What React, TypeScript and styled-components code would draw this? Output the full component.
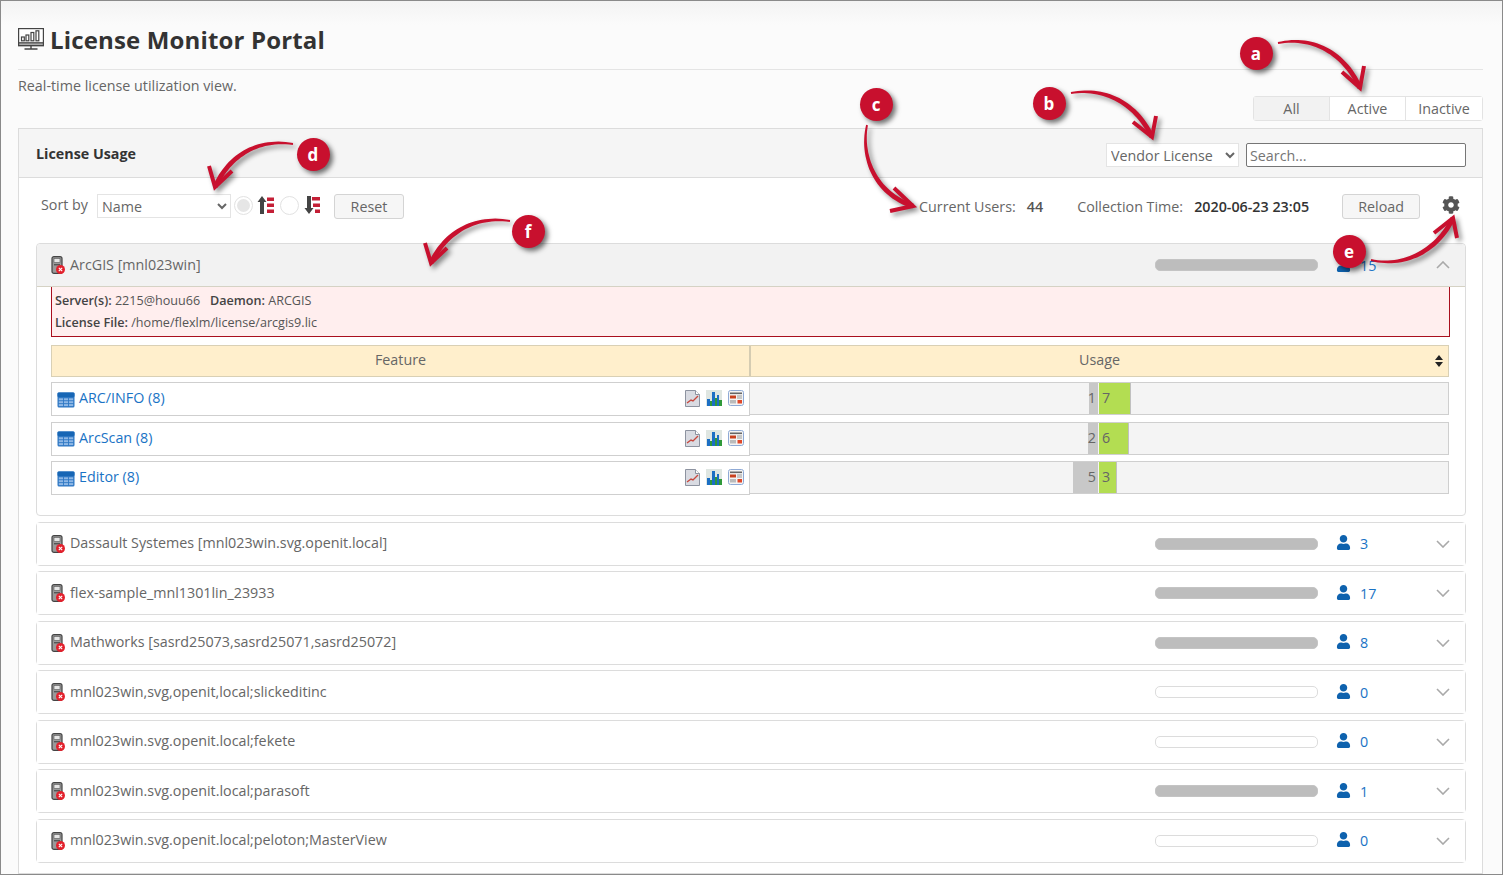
import React from "react";
import styled, { createGlobalStyle } from "styled-components";
import { FaCog, FaUser } from "react-icons/fa";

const Global = createGlobalStyle`
  html, body { margin: 0; padding: 0; height: 100%; overflow: hidden; background: #fff; }
  #root { height: 100%; }
  * { box-sizing: border-box; }
  body { font-family: "Open Sans", "Liberation Sans", sans-serif; font-size: 14.3px; color: #666; }
`;

const RED = "#c8102e";

const Page = styled.div`
  position: relative;
  width: 1503px;
  height: 875px;
  border: 1px solid #8a8a8a;
  padding: 0 19px 0 17px;
  overflow: hidden;
  display: flex;
  flex-direction: column;
  background: linear-gradient(#f3f3f3 0, #fbfbfb 24px, #fbfbfb 100%);
`;
const TitleRow = styled.div`
  height: 69px;
  flex: none;
  padding-top: 8px;
  display: flex;
  align-items: center;
  gap: 6px;
  border-bottom: 1px solid #e4e4e4;
`;
const Title = styled.h1`
  margin: 0;
  font-size: 24px;
  font-weight: 700;
  color: #333;
  letter-spacing: 0.15px;
`;
const SubRow = styled.div`
  flex: none;
  height: 58px;
  display: flex;
  justify-content: space-between;
  align-items: flex-start;
`;
const Sub = styled.p`
  margin: 6px 0 0;
  line-height: 20px;
  font-size: 14.3px;
  color: #666;
`;
const Tabs = styled.div`
  margin-top: 26px;
  display: flex;
  height: 25px;
  border: 1px solid #e3e3e3;
  border-radius: 3px;
  background: #fff;
`;
const Tab = styled.div<{ $active?: boolean; $w: number }>`
  width: ${(p) => p.$w}px;
  display: flex;
  align-items: center;
  justify-content: center;
  font-size: 14.3px;
  color: #666;
  background: ${(p) => (p.$active ? "#f2f2f2" : "#fff")};
  & + & { border-left: 1px solid #e3e3e3; }
`;
const Panel = styled.section`
  flex: 1;
  min-height: 0;
  border: 1px solid #dcdcdc;
  background: #fff;
  display: flex;
  flex-direction: column;
`;
const PanelHead = styled.header`
  flex: none;
  height: 49px;
  padding: 0 16px 0 17px;
  display: flex;
  align-items: center;
  background: #f5f5f5;
  border-bottom: 1px solid #dcdcdc;
`;
const PanelTitle = styled.h2`
  margin: 0;
  font-size: 14.3px;
  font-weight: 700;
  color: #333;
`;
const NativeSelect = styled.select<{ $w: number }>`
  flex: none;
  width: ${(p) => p.$w}px;
  height: 24px;
  font: 14.3px "Open Sans", sans-serif;
  color: #666;
  background: #fff;
  border: 1px solid #e4e4e4;
  padding: 0;
  outline: none;
`;
const HeadControls = styled.div`
  margin-left: auto;
  margin-top: 4px;
  display: flex;
  gap: 7px;
  align-items: center;
`;
const Search = styled.input`
  width: 220px;
  height: 24px;
  font: 14.3px "Open Sans", sans-serif;
  color: #666;
  padding: 0 3px;
  border: 1px solid #767676;
  border-radius: 2px;
  background: #fff;
  &::placeholder { color: #757575; opacity: 1; }
`;
const PanelBody = styled.div`
  padding: 0 16px 0 17px;
  flex: 1;
  min-height: 0;
`;
const Toolbar = styled.div`
  height: 65px;
  padding: 16px 5px 0 5px;
  display: flex;
  align-items: flex-start;
  font-size: 14.3px;
`;
const SortLabel = styled.span`
  flex: none;
  white-space: nowrap;
  line-height: 22px;
  margin-right: 9px;
`;
const Radio = styled.span<{ $on?: boolean }>`
  flex: none;
  width: 19px;
  height: 19px;
  margin-top: 2px;
  border-radius: 50%;
  border: 1px solid #e2e2e2;
  background: #fff;
  display: flex;
  align-items: center;
  justify-content: center;
  &::after {
    content: "";
    width: 13px;
    height: 13px;
    border-radius: 50%;
    background: ${(p) => (p.$on ? "#e6e6e6" : "transparent")};
  }
`;
const SortIcon = styled.svg<{ $ml: number }>`
  flex: none;
  width: 18px;
  height: 20px;
  margin: 1px 0 0 ${(p) => p.$ml}px;
`;
const Button = styled.button<{ $w: number; $ml: number }>`
  flex: none;
  width: ${(p) => p.$w}px;
  height: 25px;
  margin-left: ${(p) => p.$ml}px;
  font: 14.3px "Open Sans", sans-serif;
  color: #666;
  background: #f6f6f6;
  border: 1px solid #d4d4d4;
  border-radius: 3px;
  padding: 0;
`;
const Stat = styled.span<{ $ml?: number }>`
  flex: none;
  margin-left: ${(p) => p.$ml ?? 0}px;
  line-height: 26px;
  white-space: nowrap;
`;
const StatValue = styled.strong<{ $dark?: boolean }>`
  font-weight: 600;
  color: ${(p) => (p.$dark ? "#333" : "#555")};
  margin-left: 11px;
`;
const Gear = styled(FaCog)`
  margin: 2px 0 0 22px;
  width: 18px;
  height: 18px;
  color: #555;
  flex: none;
`;
const Section = styled.div<{ $open?: boolean }>`
  border: 1px solid #dcdcdc;
  border-radius: 4px;
  margin-bottom: ${(p) => (p.$open ? 6 : 5.5)}px;
  background: #fff;
`;
const SectionHead = styled.div<{ $open?: boolean }>`
  height: ${(p) => (p.$open ? 43 : 42)}px;
  display: flex;
  align-items: center;
  padding: 0 15px 0 14px;
  background: ${(p) => (p.$open ? "#f2f2f2" : "#fff")};
  ${(p) => (p.$open ? "border-bottom: 1px solid #d5d2c4; border-radius: 4px 4px 0 0;" : "")}
`;
const VendorName = styled.span`
  margin-left: 5px;
  font-size: 14.3px;
  color: #666;
  position: relative;
  top: -1px;
`;
const Meter = styled.div<{ $full: boolean }>`
  margin-left: auto;
  width: 163px;
  height: 12px;
  border-radius: 5px;
  background: ${(p) => (p.$full ? "#bdbdbd" : "#fff")};
  border: 1px solid ${(p) => (p.$full ? "#c4c4c4" : "#dcdcdc")};
`;
const UserIcon = styled(FaUser)`
  margin-left: 18px;
  width: 15px;
  height: 15px;
  color: #0e62ae;
  flex: none;
  position: relative;
  top: -1px;
`;
const Count = styled.span`
  margin-left: 9px;
  width: 76px;
  color: #1a73c5;
  font-size: 14.3px;
`;
const Chevron = styled.svg`
  width: 14px;
  height: 8px;
  flex: none;
  fill: none;
  stroke: #a9a9a9;
  stroke-width: 1.6;
`;
const SectionBody = styled.div`
  padding: 0 15px 14px 14px;
`;
const InfoBox = styled.div`
  height: 50px;
  padding: 3px 3px;
  background: #ffeeee;
  border: 1px solid #a90f1e;
  border-top: 0;
  font-size: 12.6px;
  line-height: 22px;
  color: #555;
  margin-bottom: 8px;
  strong { font-weight: 600; color: #444; }
`;
const TableHead = styled.div`
  display: grid;
  grid-template-columns: 697px 699px;
  width: 1398px;
  height: 32px;
  background: #ffefcc;
  border: 1px solid #d9d0b5;
  margin-bottom: 5px;
`;
const HeadCell = styled.div`
  position: relative;
  display: flex;
  align-items: center;
  justify-content: center;
  padding-bottom: 3px;
  font-size: 14.3px;
  color: #666;
  & + & { border-left: 2px solid #d5ccb2; }
`;
const SortCaret = styled.svg`
  position: absolute;
  right: 5px;
  top: 9px;
  width: 8px;
  height: 12px;
`;
const Row = styled.div`
  display: grid;
  grid-template-columns: 699px 699px;
  height: 34px;
  margin-bottom: 5.5px;
`;
const FeatureCell = styled.div`
  border: 1px solid #cfcfcf;
  background: #fff;
  display: flex;
  align-items: center;
  padding: 0 5px 1px;
`;
const FeatureLink = styled.a`
  margin-left: 4px;
  color: #1a73c5;
  font-size: 14.3px;
  text-decoration: none;
  position: relative;
  top: -1px;
`;
const ReportIcons = styled.div`
  margin-left: auto;
  display: flex;
  gap: 6px;
`;
const UsageCell = styled.div`
  height: 33px;
  display: grid;
  grid-template-columns: 349px 349px;
  background: #f4f4f4;
  border: 1px solid #cfcfcf;
  border-left: 0;
`;
const Bars = styled.div<{ $right?: boolean }>`
  display: flex;
  justify-content: ${(p) => (p.$right ? "flex-start" : "flex-end")};
`;
const Used = styled.div`
  background: #c8c8c8;
  display: flex;
  align-items: center;
  justify-content: flex-end;
  padding: 0 2px 2px 0;
  font-size: 14.3px;
  color: #666;
  border-right: 1px solid #f4f4f4;
`;
const Free = styled.div`
  background: #b3dd52;
  border-right: 1px solid #c0c0c0;
  display: flex;
  align-items: center;
  padding: 0 0 2px 3px;
  font-size: 14.3px;
  color: #666;
`;
const Badge = styled.div<{ $x: number; $y: number }>`
  position: absolute;
  left: ${(p) => p.$x - 17.5}px;
  top: ${(p) => p.$y - 17.5}px;
  width: 33px;
  height: 33px;
  border-radius: 50%;
  background: ${RED};
  color: #fff;
  font-weight: 700;
  font-size: 17px;
  display: flex;
  align-items: center;
  justify-content: center;
  box-shadow: 3px 3px 5px rgba(0, 0, 0, 0.55);
  z-index: 6;
`;
const Overlay = styled.svg`
  position: absolute;
  left: -1px;
  top: -1px;
  width: 1503px;
  height: 875px;
  pointer-events: none;
  z-index: 5;
  filter: drop-shadow(3px 3px 2.5px rgba(0, 0, 0, 0.45));
`;

type P = [number, number];
function taper(a: P, b: P, c: P, d: P): string {
  const L: P[] = [];
  const R: P[] = [];
  for (let i = 0; i <= 30; i++) {
    const t = i / 30;
    const u = 1 - t;
    const x = u * u * u * a[0] + 3 * u * u * t * b[0] + 3 * u * t * t * c[0] + t * t * t * d[0];
    const y = u * u * u * a[1] + 3 * u * u * t * b[1] + 3 * u * t * t * c[1] + t * t * t * d[1];
    const dx = 3 * u * u * (b[0] - a[0]) + 6 * u * t * (c[0] - b[0]) + 3 * t * t * (d[0] - c[0]);
    const dy = 3 * u * u * (b[1] - a[1]) + 6 * u * t * (c[1] - b[1]) + 3 * t * t * (d[1] - c[1]);
    const n = Math.hypot(dx, dy) || 1;
    const w = 0.9 + 1.5 * Math.sin(Math.min(t * 1.3, 1) * Math.PI * 0.5);
    L.push([x - (dy / n) * w, y + (dx / n) * w]);
    R.push([x + (dy / n) * w, y - (dx / n) * w]);
  }
  return "M" + [...L, ...R.reverse()].map((q) => q[0].toFixed(1) + " " + q[1].toFixed(1)).join("L") + "Z";
}

const Arrow = ({ a, b, c, d, w1, w2 }: { a: P; b: P; c: P; d: P; w1: P; w2: P }) => (
  <g>
    <path d={taper(a, b, c, d)} fill={RED} />
    <polyline points={`${w1} ${d} ${w2}`} fill="none" stroke={RED} strokeWidth={4} strokeLinejoin="miter" />
  </g>
);

const MonitorIcon = () => (
  <svg width="26" height="22" viewBox="0 0 26 22" fill="none" stroke="#444" strokeWidth="1.2">
    <rect x="0.6" y="0.6" width="24.8" height="17" fill="#fff" />
    <rect x="0.6" y="14.8" width="24.8" height="2.8" fill="#aaa" />
    <path d="M13 18v2.5M6.5 21h13" strokeWidth="1.4" />
    <rect x="3.5" y="9" width="2.8" height="3.8" />
    <rect x="8" y="7" width="2.8" height="5.8" />
    <rect x="13" y="4.5" width="2.8" height="8.3" />
    <rect x="18" y="2.8" width="2.8" height="10" />
  </svg>
);
const VendorIcon = () => (
  <svg width="14" height="18" viewBox="0 0 14 18" style={{ flex: "none" }}>
    <rect x="1" y="0.6" width="10" height="16.8" rx="2" fill="#9a9a9a" stroke="#444" strokeWidth="1.2" />
    <rect x="3" y="2.5" width="6" height="4" fill="#e6e6e6" stroke="#555" strokeWidth="0.6" />
    <rect x="3" y="8" width="6" height="1.4" fill="#555" />
    <circle cx="9.5" cy="13.5" r="4.5" fill="#e3202c" />
    <path d="M7.8 11.8l3.4 3.4M11.2 11.8l-3.4 3.4" stroke="#fff" strokeWidth="1.1" />
  </svg>
);
const TableIcon = () => (
  <svg width="18" height="16" viewBox="0 0 18 16" style={{ flex: "none", position: "relative", top: 1 }}>
    <rect x="0.5" y="0.5" width="17" height="15" rx="1.5" fill="#2f78c4" />
    <rect x="0.5" y="0.5" width="17" height="4.5" rx="1" fill="#1766b5" />
    {[6.3, 9.2, 12.1].map((y) =>
      [1.8, 6.9, 12].map((x) => <rect key={`${x}-${y}`} x={x} y={y} width="4.2" height="2" fill="#8fb8e6" />)
    )}
  </svg>
);
const TrendIcon = () => (
  <svg width="15" height="17" viewBox="0 0 15 17">
    <path d="M0.5 .5h10l4 4v12h-14z" fill="#d9dbe2" stroke="#8d93a0" />
    <path d="M10.5 .5v4h4" fill="#fff" stroke="#8d93a0" />
    <path d="M2 13l4-3 2 1 5-5" fill="none" stroke="#c8493f" strokeWidth="1.4" />
  </svg>
);
const BarsIcon = () => (
  <svg width="16" height="16" viewBox="0 0 16 16">
    <rect width="16" height="16" fill="#dfe6e2" />
    <rect x="1" y="9" width="3" height="7" fill="#1c6fc4" />
    <rect x="4" y="11" width="2" height="5" fill="#2f9a3a" />
    <rect x="6" y="2" width="3" height="14" fill="#1c6fc4" />
    <rect x="9" y="8" width="2" height="8" fill="#2f9a3a" />
    <rect x="11" y="5" width="2" height="11" fill="#1c6fc4" />
    <rect x="13" y="10" width="3" height="6" fill="#2f9a3a" />
  </svg>
);
const SheetIcon = () => (
  <svg width="16" height="16" viewBox="0 0 16 16">
    <rect x="0.5" y="0.5" width="15" height="15" rx="2" fill="#f4f4f4" stroke="#8faad6" />
    <rect x="2" y="2.5" width="12" height="1.6" fill="#666" />
    <rect x="2" y="5.5" width="6" height="3" fill="#c8401f" />
    <rect x="9" y="5.5" width="5" height="1" fill="#999" />
    <rect x="9" y="7.5" width="5" height="1" fill="#999" />
    <rect x="2" y="10" width="6" height="3.5" fill="#bbb" />
    <rect x="9.5" y="10" width="4.5" height="3.5" fill="#e0492a" />
  </svg>
);

const SortAsc = () => (
  <SortIcon $ml={4} viewBox="0 0 18 20">
    <path d="M5 1l4.5 6H7v12H3V7H.5z" fill="#444" />
    <path d="M10 2.5h7v3.5h-7zM10 8.5h7V12h-7zM10 14.5h7V18h-7z" fill="#c41f36" />
  </SortIcon>
);
const SortDesc = () => (
  <SortIcon $ml={5} viewBox="0 0 18 20">
    <path d="M3 1h4v12h2.5L5 19 .5 13H3z" fill="#444" />
    <path d="M8 2h8v3.5H8zM9 8.5h7V12H9zM11 14.5h5V18h-5z" fill="#c41f36" />
  </SortIcon>
);

const ChevronDown = () => (
  <Chevron viewBox="0 0 14 8"><polyline points="1,1 7,7 13,1" /></Chevron>
);
const ChevronUp = () => (
  <Chevron viewBox="0 0 14 8"><polyline points="1,7 7,1 13,7" /></Chevron>
);

const features = [
  { name: "ARC/INFO (8)", used: 1, free: 7, uw: 10, fw: 32 },
  { name: "ArcScan (8)", used: 2, free: 6, uw: 11, fw: 30 },
  { name: "Editor (8)", used: 5, free: 3, uw: 26, fw: 18 },
];
const vendors = [
  { name: "Dassault Systemes [mnl023win.svg.openit.local]", count: 3, full: true },
  { name: "flex-sample_mnl1301lin_23933", count: 17, full: true },
  { name: "Mathworks [sasrd25073,sasrd25071,sasrd25072]", count: 8, full: true },
  { name: "mnl023win,svg,openit,local;slickeditinc", count: 0, full: false },
  { name: "mnl023win.svg.openit.local;fekete", count: 0, full: false },
  { name: "mnl023win.svg.openit.local;parasoft", count: 1, full: true },
  { name: "mnl023win.svg.openit.local;peloton;MasterView", count: 0, full: false },
];

export default function App() {
  return (
    <Page>
      <Global />
      <TitleRow>
        <MonitorIcon />
        <Title>License Monitor Portal</Title>
      </TitleRow>
      <SubRow>
        <Sub>Real-time license utilization view.</Sub>
        <Tabs>
          <Tab $active $w={75}>All</Tab>
          <Tab $w={76}>Active</Tab>
          <Tab $w={77}>Inactive</Tab>
        </Tabs>
      </SubRow>
      <Panel>
        <PanelHead>
          <PanelTitle>License Usage</PanelTitle>
          <HeadControls>
            <NativeSelect $w={133} defaultValue="Vendor License">
              <option>Vendor License</option>
            </NativeSelect>
            <Search placeholder="Search..." />
          </HeadControls>
        </PanelHead>
        <PanelBody>
          <Toolbar>
            <SortLabel>Sort by</SortLabel>
            <NativeSelect $w={134} defaultValue="Name" style={{ marginRight: 3 }}>
              <option>Name</option>
            </NativeSelect>
            <Radio $on />
            <SortAsc />
            <Radio style={{ marginLeft: 5 }} />
            <SortDesc />
            <Button $w={70} $ml={12}>Reset</Button>
            <Stat $ml={515}>Current Users:<StatValue>44</StatValue></Stat>
            <Stat $ml={34}>Collection Time:<StatValue $dark>2020-06-23 23:05</StatValue></Stat>
            <Button $w={78} $ml={33}>Reload</Button>
            <Gear />
          </Toolbar>

          <Section $open>
            <SectionHead $open>
              <VendorIcon />
              <VendorName>ArcGIS [mnl023win]</VendorName>
              <Meter $full />
              <UserIcon />
              <Count>15</Count>
              <ChevronUp />
            </SectionHead>
            <SectionBody>
              <InfoBox>
                <div><strong>Server(s):</strong> 2215@houu66 &nbsp; <strong>Daemon:</strong> ARCGIS</div>
                <div><strong>License File:</strong> /home/flexlm/license/arcgis9.lic</div>
              </InfoBox>
              <TableHead>
                <HeadCell>Feature</HeadCell>
                <HeadCell>
                  Usage
                  <SortCaret viewBox="0 0 8 12">
                    <path d="M4 0l4 5H0zM4 12L0 7h8z" fill="#222" />
                  </SortCaret>
                </HeadCell>
              </TableHead>
              {features.map((f) => (
                <Row key={f.name}>
                  <FeatureCell>
                    <TableIcon />
                    <FeatureLink>{f.name}</FeatureLink>
                    <ReportIcons>
                      <TrendIcon />
                      <BarsIcon />
                      <SheetIcon />
                    </ReportIcons>
                  </FeatureCell>
                  <UsageCell>
                    <Bars>
                      <Used style={{ width: f.uw }}>{f.used}</Used>
                    </Bars>
                    <Bars $right>
                      <Free style={{ width: f.fw }}>{f.free}</Free>
                    </Bars>
                  </UsageCell>
                </Row>
              ))}
            </SectionBody>
          </Section>

          {vendors.map((v) => (
            <Section key={v.name}>
              <SectionHead>
                <VendorIcon />
                <VendorName>{v.name}</VendorName>
                <Meter $full={v.full} />
                <UserIcon />
                <Count>{v.count}</Count>
                <ChevronDown />
              </SectionHead>
            </Section>
          ))}
        </PanelBody>
      </Panel>

      <Overlay viewBox="0 0 1503 875">
        <Arrow a={[1278, 43]} b={[1312, 36]} c={[1344, 52]} d={[1360, 88]} w1={[1342, 72]} w2={[1364, 66]} />
        <Arrow a={[1071, 93]} b={[1105, 87]} c={[1136, 103]} d={[1152, 137]} w1={[1133, 122]} w2={[1156, 116]} />
        <Arrow a={[867, 125]} b={[860, 160]} c={[878, 195]} d={[913, 206]} w1={[894, 188]} w2={[890, 211]} />
        <Arrow a={[293, 144]} b={[255, 138]} c={[228, 158]} d={[215, 187]} w1={[209, 166]} w2={[232, 171]} />
        <Arrow a={[1371, 260]} b={[1405, 268]} c={[1438, 250]} d={[1453, 218]} w1={[1434, 233]} w2={[1457, 238]} />
        <Arrow a={[510, 221]} b={[472, 215]} c={[444, 235]} d={[431, 263]} w1={[425, 243]} w2={[447, 248]} />
      </Overlay>
      <Badge $x={1256} $y={53}>a</Badge>
      <Badge $x={1049} $y={103}>b</Badge>
      <Badge $x={876} $y={104}>c</Badge>
      <Badge $x={313} $y={154}>d</Badge>
      <Badge $x={1349} $y={251}>e</Badge>
      <Badge $x={528} $y={231}>f</Badge>
    </Page>
  );
}
